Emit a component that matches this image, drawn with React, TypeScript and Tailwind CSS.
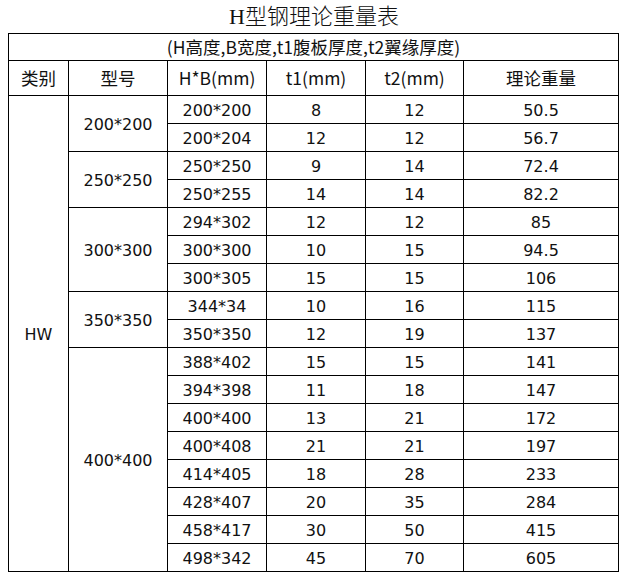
import React from 'react';

type Row = { size: string; t1: string; t2: string; w: string };
type Group = { model: string; rows: Row[] };

const groups: Group[] = [
  {
    model: '200*200',
    rows: [
      { size: '200*200', t1: '8', t2: '12', w: '50.5' },
      { size: '200*204', t1: '12', t2: '12', w: '56.7' },
    ],
  },
  {
    model: '250*250',
    rows: [
      { size: '250*250', t1: '9', t2: '14', w: '72.4' },
      { size: '250*255', t1: '14', t2: '14', w: '82.2' },
    ],
  },
  {
    model: '300*300',
    rows: [
      { size: '294*302', t1: '12', t2: '12', w: '85' },
      { size: '300*300', t1: '10', t2: '15', w: '94.5' },
      { size: '300*305', t1: '15', t2: '15', w: '106' },
    ],
  },
  {
    model: '350*350',
    rows: [
      { size: '344*34', t1: '10', t2: '16', w: '115' },
      { size: '350*350', t1: '12', t2: '19', w: '137' },
    ],
  },
  {
    model: '400*400',
    rows: [
      { size: '388*402', t1: '15', t2: '15', w: '141' },
      { size: '394*398', t1: '11', t2: '18', w: '147' },
      { size: '400*400', t1: '13', t2: '21', w: '172' },
      { size: '400*408', t1: '21', t2: '21', w: '197' },
      { size: '414*405', t1: '18', t2: '28', w: '233' },
      { size: '428*407', t1: '20', t2: '35', w: '284' },
      { size: '458*417', t1: '30', t2: '50', w: '415' },
      { size: '498*342', t1: '45', t2: '70', w: '605' },
    ],
  },
];

const total = groups.reduce((n, g) => n + g.rows.length, 0);

// body cells use a Tahoma-ish face, headers a YaHei-ish one
const cell = 'border border-black p-0 text-center align-middle';
const num = "font-['DejaVu_Sans',sans-serif] text-[16px] text-[#111] leading-none pt-[2px]";
const cjk = "font-['Noto_Sans_CJK_SC',sans-serif] text-[17.5px] text-[#111] font-normal leading-none";

export default function App() {
  return (
    <div className="w-[626px] h-[576px] bg-white">
      <div className="h-[33px] flex items-center justify-center pl-[2px] pt-[1px] font-['Liberation_Serif','Noto_Sans_CJK_SC',serif] text-[22px] font-light text-[#111] leading-none">
        H型钢理论重量表
      </div>
      <table className="ml-[8px] w-[611px] table-fixed border-collapse">
        <colgroup>
          <col className="w-[60px]" />
          <col className="w-[99px]" />
          <col className="w-[99px]" />
          <col className="w-[99px]" />
          <col className="w-[98px]" />
          <col className="w-[155px]" />
        </colgroup>
        <thead>
          <tr className="h-[27px]">
            <th colSpan={6} className={`${cell} ${cjk}`}>
              (H高度,B宽度,t1腹板厚度,t2翼缘厚度)
            </th>
          </tr>
          <tr className="h-[35px]">
            {['类别', '型号', 'H*B(mm)', 't1(mm)', 't2(mm)', '理论重量'].map((h) => (
              <th key={h} className={`${cell} ${cjk}`}>
                {h}
              </th>
            ))}
          </tr>
        </thead>
        <tbody>
          {groups.map((g, gi) =>
            g.rows.map((r, ri) => (
              <tr key={r.size + r.w} className="h-[28px]">
                {gi === 0 && ri === 0 && (
                  <td rowSpan={total} className={`${cell} ${num}`}>
                    HW
                  </td>
                )}
                {ri === 0 && (
                  <td rowSpan={g.rows.length} className={`${cell} ${num}`}>
                    {g.model}
                  </td>
                )}
                <td className={`${cell} ${num}`}>{r.size}</td>
                <td className={`${cell} ${num}`}>{r.t1}</td>
                <td className={`${cell} ${num}`}>{r.t2}</td>
                <td className={`${cell} ${num}`}>{r.w}</td>
              </tr>
            ))
          )}
        </tbody>
      </table>
    </div>
  );
}
